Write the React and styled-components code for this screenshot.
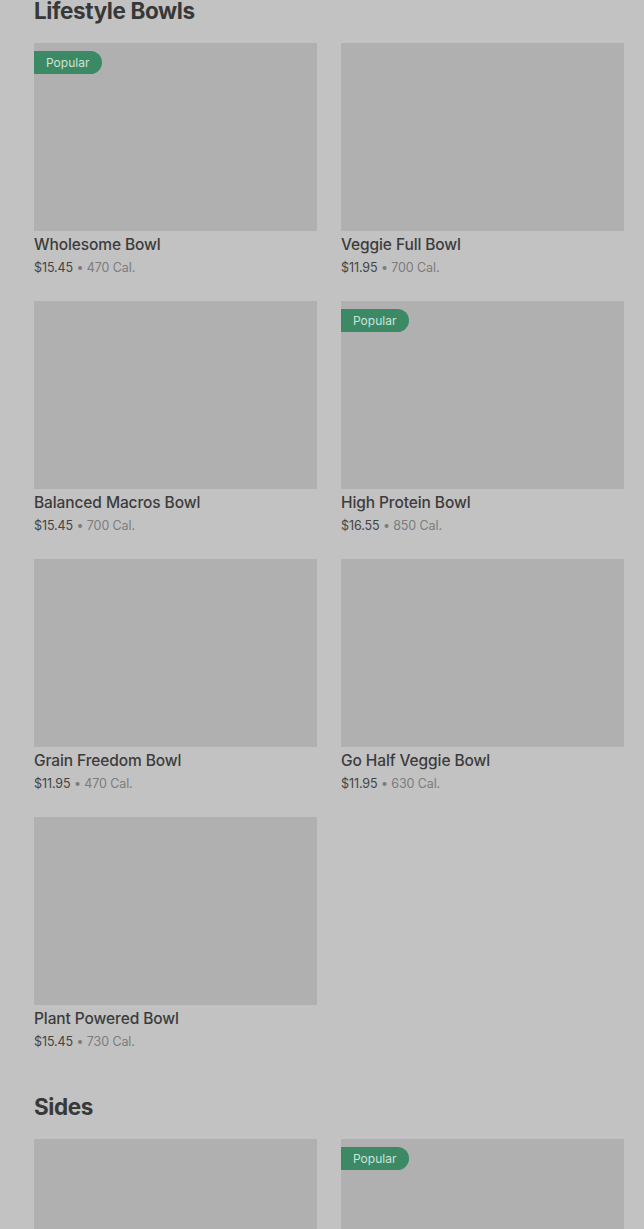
import styled, { createGlobalStyle } from "styled-components";

const GlobalStyle = createGlobalStyle`
  html, body {
    margin: 0;
    padding: 0;
    background: #c2c2c2;
    font-family: Inter, "Noto Sans", sans-serif;
  }
`;

const Page = styled.div`
  padding: 0 20px 0 34px;
  margin-top: -5px;
`;

const Section = styled.section`
  margin-bottom: 40px;
`;

const Heading = styled.h2`
  margin: 0 0 16px;
  font-size: 22.5px;
  line-height: 32px;
  font-weight: 700;
  letter-spacing: -0.4px;
  color: #383838;
`;

const Grid = styled.div`
  display: grid;
  grid-template-columns: repeat(2, 1fr);
  column-gap: 24px;
  row-gap: 24px;
`;

const Card = styled.div`
  display: flex;
  flex-direction: column;
`;

const Photo = styled.div`
  position: relative;
  height: 188px;
  background: #b0b0b0;
`;

const Badge = styled.span`
  position: absolute;
  top: 8px;
  left: 0;
  height: 23px;
  padding: 0 13px 0 12px;
  display: flex;
  align-items: center;
  background: #3b8a65;
  color: #cfe3d8;
  font-size: 12px;
  border-radius: 0 12px 12px 0;
`;

const Name = styled.div`
  margin-top: 4px;
  font-size: 15.5px;
  line-height: 20px;
  font-weight: 500;
  letter-spacing: -0.1px;
  color: #3c3c3c;
`;

const Meta = styled.div`
  margin-top: 4px;
  font-size: 12.5px;
  line-height: 18px;
  letter-spacing: -0.1px;
  color: #7c7c7c;
`;

const Price = styled.span`
  color: #444;
`;

const bowls = [
  { name: "Wholesome Bowl", price: "$15.45", cal: "470 Cal.", popular: true },
  { name: "Veggie Full Bowl", price: "$11.95", cal: "700 Cal." },
  { name: "Balanced Macros Bowl", price: "$15.45", cal: "700 Cal." },
  { name: "High Protein Bowl", price: "$16.55", cal: "850 Cal.", popular: true },
  { name: "Grain Freedom Bowl", price: "$11.95", cal: "470 Cal." },
  { name: "Go Half Veggie Bowl", price: "$11.95", cal: "630 Cal." },
  { name: "Plant Powered Bowl", price: "$15.45", cal: "730 Cal." },
];

const sides = [
  { name: "Chips", price: "$2.25", cal: "540 Cal." },
  { name: "Guacamole", price: "$3.75", cal: "230 Cal.", popular: true },
];

const Item = ({ item }) => (
  <Card>
    <Photo>{item.popular && <Badge>Popular</Badge>}</Photo>
    <Name>{item.name}</Name>
    <Meta>
      <Price>{item.price}</Price> • {item.cal}
    </Meta>
  </Card>
);

const App = () => (
  <>
    <GlobalStyle />
    <Page>
      <Section>
        <Heading>Lifestyle Bowls</Heading>
        <Grid>
          {bowls.map((b) => (
            <Item key={b.name} item={b} />
          ))}
        </Grid>
      </Section>
      <Section>
        <Heading>Sides</Heading>
        <Grid>
          {sides.map((s) => (
            <Item key={s.name} item={s} />
          ))}
        </Grid>
      </Section>
    </Page>
  </>
);

export default App;
